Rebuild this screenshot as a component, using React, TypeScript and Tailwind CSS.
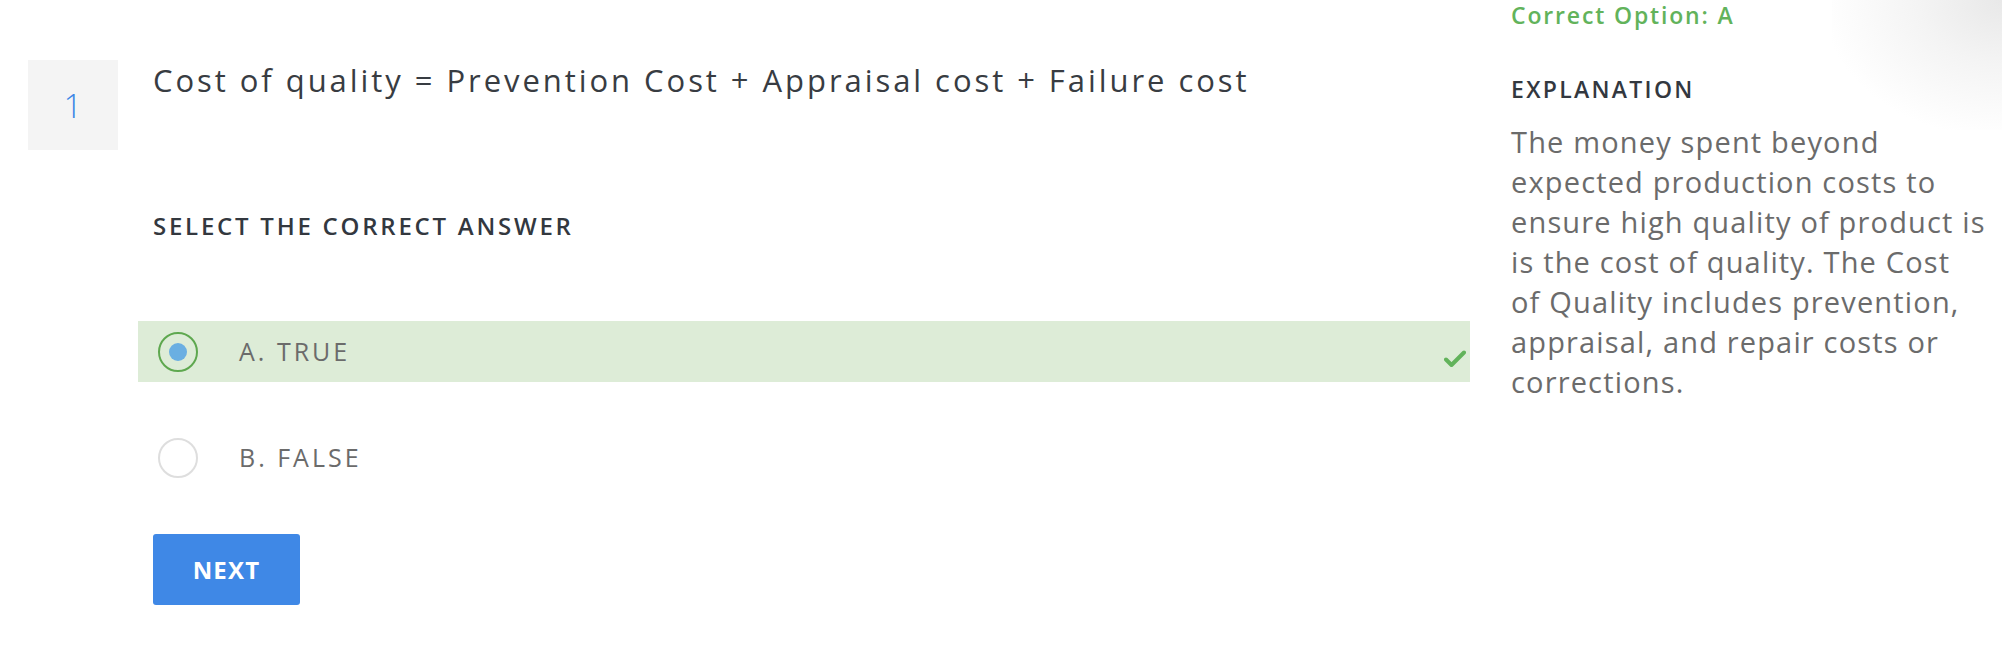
import React from 'react';

const options = [
  { id: 'A', label: 'TRUE', selected: true, correct: true },
  { id: 'B', label: 'FALSE', selected: false, correct: false },
];

const App: React.FC = () => {
  return (
    <div
      className="relative min-h-[650px] w-full overflow-hidden bg-white"
      style={{ fontFamily: '"Open Sans", "Noto Sans", sans-serif' }}
    >
      {/* soft shadow in the top right corner */}
      <div className="pointer-events-none absolute right-0 top-0 h-[130px] w-[170px] bg-[radial-gradient(ellipse_at_top_right,#e8e8e8_0%,#f4f4f4_35%,rgba(255,255,255,0)_75%)]" />

      <div className="flex pl-[28px]">
        {/* question number */}
        <div className="mt-[60px] flex h-[90px] w-[90px] shrink-0 items-center justify-center bg-[#f4f4f4]">
          <span className="text-[33px] font-light leading-none text-[#3d86e6]">1</span>
        </div>

        {/* question body */}
        <div className="ml-[35px] w-[1317px] shrink-0 pt-[60px]">
          <h1 className="text-[31px] leading-[40px] tracking-[0.095em] text-[#383c42]">
            Cost of quality = Prevention Cost + Appraisal cost + Failure cost
          </h1>

          <p className="mt-[110px] text-[24px] font-semibold leading-[32px] tracking-[0.115em] text-[#33383f]">
            SELECT THE CORRECT ANSWER
          </p>

          <div className="-ml-[15px] mt-[79px] flex flex-col gap-[45px]">
            {options.map((o) => (
              <div
                key={o.id}
                className={`flex h-[61px] items-center pl-[20px] pr-[4px] ${o.correct ? 'bg-[#ddecd7]' : ''}`}
              >
                <div
                  className={`flex h-[40px] w-[40px] shrink-0 items-center justify-center rounded-full border-2 ${
                    o.selected ? 'border-[#5ea84f]' : 'border-[#dedede]'
                  }`}
                >
                  {o.selected && <div className="h-[18px] w-[18px] rounded-full bg-[#6aafe2]" />}
                </div>
                <span className="ml-[41px] text-[25px] tracking-[0.12em] text-[#6b6b6b]">
                  {o.id}. {o.label}
                </span>
                {o.correct && (
                  <svg className="ml-auto mt-[14px]" width="22" height="18" viewBox="0 0 22 18" fill="none">
                    <path d="M2 9.5l5.5 5.5L20 2.5" stroke="#62b35b" strokeWidth="4" strokeLinecap="round" strokeLinejoin="round" />
                  </svg>
                )}
              </div>
            ))}
          </div>

          <button className="mt-[46px] flex h-[71px] w-[147px] items-center justify-center rounded-[3px] bg-[#3f88e6] text-[24px] font-bold tracking-[0.05em] text-white">
            NEXT
          </button>
        </div>

        {/* explanation */}
        <div className="ml-[41px] w-[480px] shrink-0">
          <p className="text-[23px] font-semibold leading-[30px] tracking-[0.08em] text-[#62b35b]">
            Correct Option: A
          </p>
          <p className="mt-[44px] text-[23px] font-semibold leading-[30px] tracking-[0.1em] text-[#33383f]">
            EXPLANATION
          </p>
          <p className="mt-[18px] text-[29px] leading-[40px] tracking-[0.04em] text-[#6b6b6b]">
            The money spent beyond
            <br />
            expected production costs to
            <br />
            ensure high quality of product is
            <br />
            is the cost of quality. The Cost
            <br />
            of Quality includes prevention,
            <br />
            appraisal, and repair costs or
            <br />
            corrections.
          </p>
        </div>
      </div>
    </div>
  );
};

export default App;
